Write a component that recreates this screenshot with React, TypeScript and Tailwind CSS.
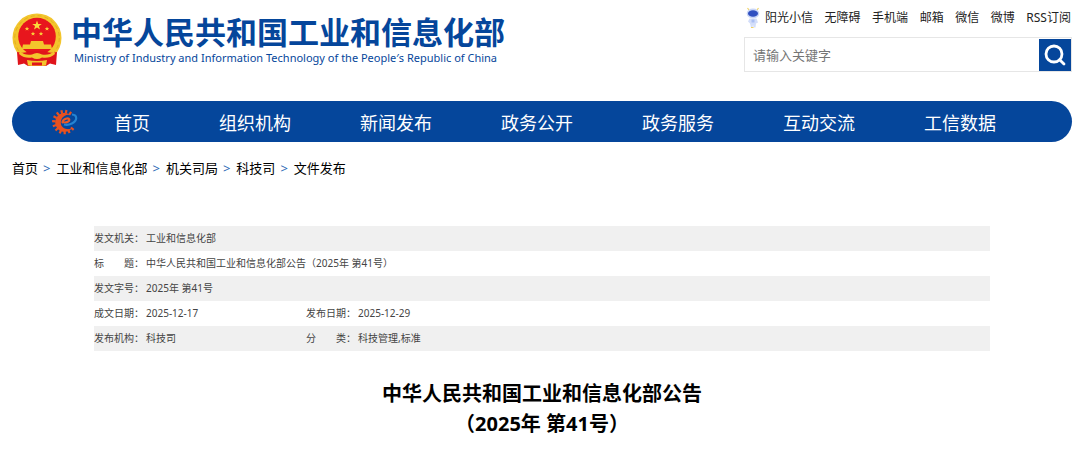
import { Search } from 'lucide-react'

const topLinks = ['无障碍', '手机端', '邮箱', '微信', '微博', 'RSS订阅']

const navItems = ['首页', '组织机构', '新闻发布', '政务公开', '政务服务', '互动交流', '工信数据']

const crumbs = ['首页', '工业和信息化部', '机关司局', '科技司', '文件发布']

// gear teeth angles, leaving the right side open
const teeth = Array.from({ length: 12 }, (_, i) => 130 + i * 24)

function Emblem() {
  return (
    <svg viewBox="0 0 50 54" className="h-[54px] w-[50px] shrink-0" aria-hidden="true">
      <circle cx="25" cy="25" r="24.5" fill="#f3c52c" />
      <circle cx="25" cy="25" r="22.3" fill="none" stroke="#e3ad22" strokeWidth="1" strokeDasharray="4 3" />
      <circle cx="25" cy="23.5" r="18.8" fill="#e8161d" />
      <path d="M25 7.5l1.2 3.4h3.6l-2.9 2.1 1.1 3.5-3-2.1-3 2.1 1.1-3.5-2.9-2.1h3.6z" fill="#fbdc3c" />
      <g fill="#f9cf38">
        <path d="M15 13.6l.6 1.4h1.6l-1.2 1 .4 1.6-1.4-.9-1.4.9.4-1.6-1.2-1h1.6z" />
        <path d="M35 13.6l.6 1.4h1.6l-1.2 1 .4 1.6-1.4-.9-1.4.9.4-1.6-1.2-1h1.6z" />
        <path d="M21 18.6l.6 1.4h1.6l-1.2 1 .4 1.6-1.4-.9-1.4.9.4-1.6-1.2-1h1.6z" />
        <path d="M29 18.6l.6 1.4h1.6l-1.2 1 .4 1.6-1.4-.9-1.4.9.4-1.6-1.2-1h1.6z" />
      </g>
      {/* gate */}
      <path d="M19 28h12l1 3.5h7l1 4.500H10l1-4.500h7z" fill="#f3c52c" />
      {/* ribbons */}
      <path d="M5 39q8 2 12-1h16q4 3 12 1l-1 13-6-1.500-4 2.500H16l-4-2.500L6 52z" fill="#e0141b" />
      <path d="M8 38q5 5 12 3.500 5-3 10 0 7 1.500 12-3.500l1 3q-6 5-13 3.500-5 3-10 0-7 1.500-13-3.500z" fill="#f3c52c" />
      <path d="M15 47q10 2 20 0l-1 5.500q-9 1-18 0z" fill="#f3c52c" />
      <path d="M20 49.500h10v3H20z" fill="#e0141b" />
    </svg>
  )
}

function Mascot() {
  return (
    <svg viewBox="0 0 14 22" className="h-[22px] w-[14px] shrink-0" aria-hidden="true">
      <path d="M3 3L1.5 1M11 3l1.5-2" stroke="#f0d264" strokeWidth="1.2" />
      <ellipse cx="7" cy="6.5" rx="6.3" ry="5" fill="#c9d6f6" />
      <ellipse cx="7" cy="6.5" rx="5" ry="3.2" fill="#2f4fc0" />
      <path d="M3.5 11.5h7l1.5 4-2 1-.5 4h-2l-.5-3-.5 3H5l-1-4-2-2z" fill="#d3defa" />
      <path d="M5.5 12.5h3v3h-3z" fill="#aabff2" />
      <path d="M5 20.5h2.5" stroke="#f0d264" strokeWidth="1" />
    </svg>
  )
}

function GearLogo() {
  return (
    <svg viewBox="0 0 26 26" className="h-[26px] w-[26px] shrink-0" aria-hidden="true">
      <g fill="#e8511f">
        {teeth.map((a) => (
          <rect key={a} x="11.2" y="0.8" width="2.2" height="3.6" transform={`rotate(${a} 12.3 13)`} />
        ))}
      </g>
      <path d="M18 5.5A9.500 9.500 0 1 0 20 19.500C15 21.500 8.800 19 8.800 13.800C8.800 8.500 13 5.500 18 5.500Z" fill="#e8511f" />
      <path d="M10.500 13.500C11 9.500 16.500 8.300 17.300 10.500C17.800 12.500 14.500 13.500 12.500 13.500" fill="none" stroke="#ee5a24" strokeWidth="2.200" strokeLinecap="round" />
      <path d="M12 15.500C17 17 24 13.500 24.200 9.300C24.200 6.800 22.500 5.600 20 5.500" fill="none" stroke="#2484d2" strokeWidth="2.200" />
    </svg>
  )
}

function Header() {
  return (
    <header className="flex items-start justify-between">
      <a href="#" className="flex pt-[13px] text-[#05469b]">
        <Emblem />
        <div className="ml-[9px] pt-px">
          <h1 className="text-[31px] leading-[37px] font-bold whitespace-nowrap">中华人民共和国工业和信息化部</h1>
          <p className="pl-[3px] text-[11px] leading-[14px] whitespace-nowrap">
            Ministry of Industry and Information Technology of the People′s Republic of China
          </p>
        </div>
      </a>

      <div className="w-[328px] pt-[7px]">
        <div className="flex items-center justify-between pr-px pl-[2px] text-[12px] leading-[22px] whitespace-nowrap text-[#222]">
          <a href="#" className="flex items-center gap-[5px]">
            <Mascot />
            阳光小信
          </a>
          {topLinks.map((item) => (
            <a key={item} href="#">
              {item}
            </a>
          ))}
        </div>
        <form className="mt-2 flex h-[35px] items-center border border-[#e6e6e6]" onSubmit={(e) => e.preventDefault()}>
          <input
            type="text"
            aria-label="请输入关键字"
            placeholder="请输入关键字"
            className="min-w-0 flex-1 px-2 text-[13px] leading-[20px] outline-none placeholder:text-[#757575]"
          />
          <button type="submit" aria-label="搜索" className="flex h-8 w-8 items-center justify-center bg-[#05469b] text-white">
            <Search className="h-6 w-6" strokeWidth={2.8} />
          </button>
        </form>
      </div>
    </header>
  )
}

function Nav() {
  return (
    <nav className="mt-[29px] flex h-[41px] items-center rounded-full bg-[#05469b] pl-10 text-[18px] leading-[28px] text-white">
      <GearLogo />
      <ul className="ml-9 flex gap-[69px] pt-0.5 whitespace-nowrap">
        {navItems.map((item) => (
          <li key={item}>
            <a href="#">{item}</a>
          </li>
        ))}
      </ul>
    </nav>
  )
}

function Breadcrumb() {
  return (
    <ol className="mt-4 flex text-[13px] leading-[20px] text-black">
      {crumbs.map((item, i) => (
        <li key={item} className="flex">
          {i > 0 && <span className="mr-[6px] ml-[5px] text-[#2a68b4]">&gt;</span>}
          <a href="#">{item}</a>
        </li>
      ))}
    </ol>
  )
}

// two-character labels are spread to the width of four
const rows = [
  [['发文机关：', '工业和信息化部']],
  [['标　　题：', '中华人民共和国工业和信息化部公告（2025年 第41号）']],
  [['发文字号：', '2025年 第41号']],
  [
    ['成文日期：', '2025-12-17'],
    ['发布日期：', '2025-12-29'],
  ],
  [
    ['发布机构：', '科技司'],
    ['分　　类：', '科技管理,标准'],
  ],
]

function MetaTable() {
  return (
    <table className="w-full table-fixed text-left text-[10px] leading-[15px] text-[#444]">
      <colgroup>
        <col className="w-[52px]" />
        <col className="w-[160px]" />
        <col className="w-[52px]" />
        <col />
      </colgroup>
      <tbody>
        {rows.map((cells) => (
          <tr key={cells[0][0]} className="h-[25px] odd:bg-[#f0f0f0]">
            {cells.map(([label, value]) => [
              <th key={label} scope="row" className="p-0 font-normal whitespace-nowrap">
                {label}
              </th>,
              <td key={value} colSpan={cells.length === 1 ? 3 : 1} className="p-0">
                {value}
              </td>,
            ])}
          </tr>
        ))}
      </tbody>
    </table>
  )
}

export default function App() {
  return (
    <div className="min-h-screen bg-white pr-2 pb-4 pl-3 font-['Noto_Sans','Noto_Sans_CJK_SC',sans-serif]">
      <Header />
      <Nav />
      <Breadcrumb />
      <main className="mt-12 px-[82px]">
        <MetaTable />
        <h2 className="mt-7 text-center text-[20px] leading-[30px] font-bold text-black">
          中华人民共和国工业和信息化部公告
          <br />
          （2025年 第41号）
        </h2>
      </main>
    </div>
  )
}
